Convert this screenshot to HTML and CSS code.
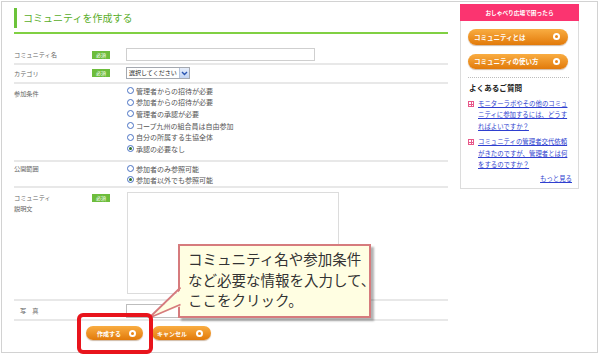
FILE: index.html
```html
<!DOCTYPE html>
<html lang="ja">
<head>
<meta charset="utf-8">
<title>コミュニティを作成する</title>
<link rel="stylesheet" href="styles.css">
</head>
<body>
<div class="frame">
  <div class="main">
    <div class="head"><div class="title">コミュニティを作成する</div></div>
    <div class="row r-name">
      <div class="lbl">コミュニティ名</div>
      <div class="req"><span class="badge">必須</span></div>
      <div class="field"><span class="input name-input"></span></div>
    </div>
    <div class="row r-cat">
      <div class="lbl">カテゴリ</div>
      <div class="req"><span class="badge">必須</span></div>
      <div class="field">
        <span class="select"><span class="sel-text">選択してください</span><span class="sel-arrow"><svg width="7" height="5" viewBox="0 0 7 5"><path d="M1 1 L3.5 3.5 L6 1" fill="none" stroke="#2a55b0" stroke-width="1.4"/></svg></span></span>
      </div>
    </div>
    <div class="row r-join">
      <div class="lbl">参加条件</div>
      <div class="req"></div>
      <div class="field radios">
        <div class="radio"><span class="rc"></span>管理者からの招待が必要</div>
        <div class="radio"><span class="rc"></span>参加者からの招待が必要</div>
        <div class="radio"><span class="rc"></span>管理者の承認が必要</div>
        <div class="radio"><span class="rc"></span>コープ九州の組合員は自由参加</div>
        <div class="radio"><span class="rc"></span>自分の所属する生協全体</div>
        <div class="radio"><span class="rc on"></span>承認の必要なし</div>
      </div>
    </div>
    <div class="row r-pub">
      <div class="lbl">公開範囲</div>
      <div class="req"></div>
      <div class="field radios">
        <div class="radio"><span class="rc"></span>参加者のみ参照可能</div>
        <div class="radio"><span class="rc on"></span>参加者以外でも参照可能</div>
      </div>
    </div>
    <div class="row r-desc">
      <div class="lbl">コミュニティ<br>説明文</div>
      <div class="req"><span class="badge">必須</span></div>
      <div class="field"><span class="textarea"></span></div>
    </div>
    <div class="row r-photo">
      <div class="lbl photo-lbl">写　真</div>
      <div class="req"></div>
      <div class="field"><span class="input photo-input"></span></div>
    </div>
    <div class="actions">
      <span class="btn btn-create">作成する<i class="ico"></i></span>
      <span class="btn btn-cancel">キャンセル<i class="ico"></i></span>
    </div>
  </div>
  <aside class="side">
    <div class="side-head">おしゃべり広場で困ったら</div>
    <span class="sbtn">コミュニティとは<i class="ico"></i></span>
    <span class="sbtn">コミュニティの使い方<i class="ico"></i></span>
    <div class="dots"></div>
    <div class="faq-title">よくあるご質問</div>
    <div class="faq">
      <span class="plus"></span>
      <a class="faq-link" href="#">モニターラボやその他のコミュ<br>ニティに参加するには、どうす<br>ればよいですか？</a>
    </div>
    <div class="faq faq2">
      <span class="plus"></span>
      <a class="faq-link" href="#">コミュニティの管理者交代依頼<br>がきたのですが、管理者とは何<br>をするのですか？</a>
    </div>
    <div class="more"><a href="#">もっと見る</a></div>
  </aside>
</div>

<div class="callout">
  <svg class="tail" width="40" height="40" viewBox="0 0 40 40">
    <polygon points="37,3 2,34 37,21" fill="#fffee2"/>
    <polyline points="33.5,3.5 2,34 33.5,20.5" fill="none" stroke="#d67b7d" stroke-width="1.8"/>
  </svg>
  <p class="callout-text">コミュニティ名や参加条件<br>など必要な情報を入力して、<br>ここをクリック。</p>
</div>
<div class="highlight"></div>
</body>
</html>
```

FILE: styles.css
```css
* { box-sizing: border-box; }
body {
  margin: 0;
  background: #fff;
  font-family: "Noto Sans CJK JP", "Noto Sans", sans-serif;
  position: relative;
  width: 600px;
  height: 355px;
  overflow: hidden;
}
.frame {
  margin: 1px 0 0 1px;
  width: 597px;
  height: 352px;
  border: 1px solid #d2d2d2;
  display: flex;
  gap: 12px;
  padding: 2px 0 0 12px;
}
.main {
  width: 434px;
  padding-top: 4px;
  display: flex;
  flex-direction: column;
}
.head {
  padding-bottom: 4px;
  border-bottom: 2px solid #80d043;
}
.title {
  height: 20px;
  border-left: 3px solid #6cc33a;
  padding-left: 6px;
  display: flex;
  align-items: center;
  font-size: 10px;
  line-height: 1;
  color: #5aae2b;
}
.row {
  display: grid;
  grid-template-columns: 78px 34px 1fr;
  border-bottom: 2px solid #e8e8e8;
  font-size: 6.2px;
  color: #666;
}
.lbl { line-height: 11px; white-space: nowrap; }
.r-name { padding: 14px 0 2px; align-items: center; }
.r-cat { padding: 2px 0 3px; align-items: center; }
.r-join { padding: 1px 0 5px; }
.r-join .lbl { padding-top: 3px; }
.r-pub { padding: 1.5px 0 1px; }
.r-pub .lbl { padding-top: 0; line-height: 11px; }
.r-desc { padding: 4px 0 5px; }
.r-desc .lbl { padding-top: 0; }
.r-desc .req { padding-top: 2px; }
.r-photo { padding: 3px 0 1px; }
.photo-lbl { padding: 1px 0 0 6px; }

.req { display: flex; align-items: flex-start; }
.r-name .req, .r-cat .req { align-items: center; }
.badge {
  display: inline-block;
  width: 18px;
  height: 8px;
  background: #6dbd3c;
  color: #fff;
  font-size: 5px;
  line-height: 8px;
  text-align: center;
}
.field { display: flex; }
.input {
  display: block;
  border: 1px solid #cfcfcf;
  background: #fff;
}
.name-input { width: 189px; height: 13px; }
.photo-input { width: 110px; height: 14px; border-color: #bdbdbd; }
.select {
  display: flex;
  width: 64px;
  height: 12px;
  border: 1px solid #a5a9b0;
  background: #fff;
  font-size: 6px;
  color: #222;
  align-items: center;
}
.sel-text { flex: 1; padding-left: 2px; white-space: nowrap; overflow: hidden; line-height: 10px; }
.sel-arrow {
  width: 10px;
  height: 10px;
  background: linear-gradient(#e6eefb, #c3d5f2);
  border-left: 1px solid #b5c4dc;
  display: flex;
  align-items: center;
  justify-content: center;
}
.radios { flex-direction: column; }
.radio {
  display: flex;
  align-items: center;
  gap: 2px;
  height: 11.6px;
  font-size: 7px;
  color: #555;
  white-space: nowrap;
  margin-left: 1px;
}
.r-pub .radio { height: 11px; }
.rc {
  width: 7px;
  height: 7px;
  border: 1px solid #4a72c4;
  border-radius: 50%;
  background: #fff;
  display: flex;
  align-items: center;
  justify-content: center;
}
.rc.on::after {
  content: "";
  width: 3px;
  height: 3px;
  border-radius: 50%;
  background: #2f6e2a;
}
.textarea {
  display: block;
  width: 212px;
  height: 102px;
  border: 1px solid #dcdcdc;
  margin-left: 1px;
}
.actions {
  display: flex;
  gap: 9px;
  padding: 5px 0 0 72px;
}
.btn {
  display: flex;
  align-items: center;
  justify-content: space-between;
  height: 14px;
  border-radius: 7px;
  background: linear-gradient(#f9ad42, #e27a0a);
  box-shadow: 0 1px 1px rgba(120, 60, 0, 0.35);
  color: #fff;
  font-weight: bold;
  font-size: 6px;
  white-space: nowrap;
}
.btn-create { width: 57px; padding: 0 7px 0 11px; }
.btn-cancel { width: 59px; padding: 0 8px 0 5px; }
.ico {
  width: 7px;
  height: 7px;
  border-radius: 50%;
  background: #fff;
  display: flex;
  align-items: center;
  justify-content: center;
  flex: none;
}
.ico::after {
  content: "";
  width: 3px;
  height: 3px;
  border-radius: 50%;
  background: #ea8516;
}

.side {
  width: 119px;
  height: 185px;
  border: 1px solid #dcdcdc;
  display: flex;
  flex-direction: column;
}
.side-head {
  height: 17px;
  margin: -1px -1px 0;
  background: #fb3470;
  color: #fff;
  font-weight: bold;
  font-size: 5.7px;
  display: flex;
  align-items: center;
  justify-content: center;
  white-space: nowrap;
}
.sbtn {
  display: flex;
  align-items: center;
  justify-content: space-between;
  margin: 8px 0 0 7px;
  width: 100px;
  height: 15.5px;
  border-radius: 8px;
  background: linear-gradient(#f9ad42, #e27a0a);
  box-shadow: 0 1px 1px rgba(120, 60, 0, 0.35);
  color: #fff;
  font-weight: bold;
  font-size: 6.5px;
  padding: 0 8px 0 6px;
  white-space: nowrap;
}
.sbtn + .sbtn { margin-top: 9px; }
.dots {
  margin: 8px 0 0 7px;
  width: 101px;
  border-top: 1px dotted #bdbdbd;
}
.faq-title {
  margin: 5px 0 0 8px;
  font-size: 7.6px;
  line-height: 10px;
  font-weight: bold;
  color: #222;
  white-space: nowrap;
}
.faq {
  display: flex;
  gap: 4px;
  margin: 5px 0 0 7px;
}
.faq2 { margin-top: 4.5px; }
.plus {
  flex: none;
  width: 6px;
  height: 6px;
  margin-top: 3px;
  border: 1px solid #e8588a;
  background: #fff;
  position: relative;
}
.plus::before, .plus::after {
  content: "";
  position: absolute;
  background: #e8588a;
}
.plus::before { left: 0; right: 0; top: 1.5px; height: 1px; }
.plus::after { top: 0; bottom: 0; left: 1.5px; width: 1px; }
.faq-link {
  font-size: 6.4px;
  line-height: 11.3px;
  color: #2f3fcf;
  text-decoration: underline;
  white-space: nowrap;
}
.more {
  margin: 3px 6px 0 0;
  text-align: right;
  font-size: 6.4px;
  line-height: 11px;
}
.more a { color: #2f3fcf; text-decoration: underline; }

.callout {
  position: absolute;
  left: 178px;
  top: 244px;
  width: 193px;
  height: 74px;
  border: 2px solid #d67b7d;
  background: #fffee2;
  box-shadow: 3px 3px 2px rgba(0, 0, 0, 0.3);
}
.tail {
  position: absolute;
  left: -33px;
  top: 38px;
  overflow: visible;
}
.callout-text {
  margin: 0;
  padding: 3px 0 0 8px;
  font-size: 14.5px;
  line-height: 20.5px;
  color: #333;
  white-space: nowrap;
}
.highlight {
  position: absolute;
  left: 77px;
  top: 313px;
  width: 76px;
  height: 41px;
  border: 4px solid #e8141c;
  border-radius: 6px;
}
```
